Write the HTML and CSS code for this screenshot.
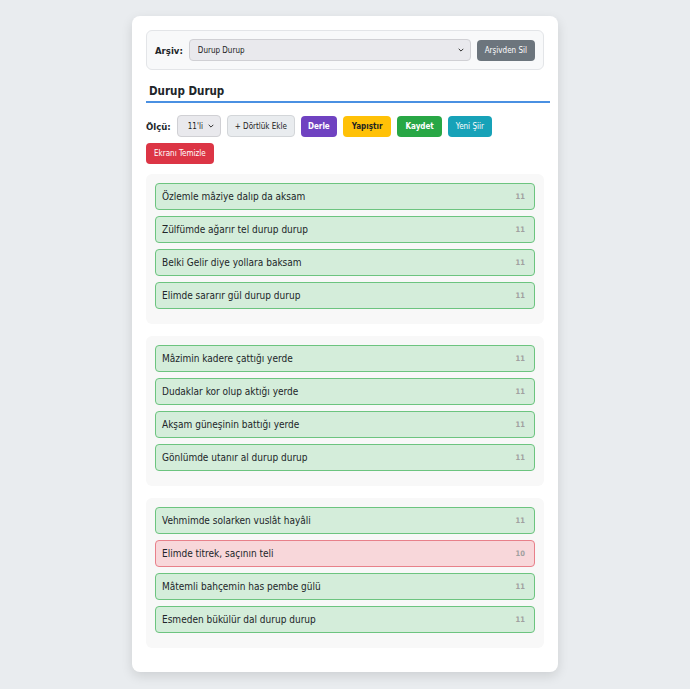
FILE: index.html
```html
<!DOCTYPE html>
<html lang="tr">
<head>
  <meta charset="UTF-8" />
  <meta name="viewport" content="width=device-width, initial-scale=1.0"/>
  <title>Şiir Defteri</title>
  <link rel="stylesheet" href="styles.css">
</head>
<body>
  <div class="card">
    <div class="archive-bar">
      <label for="archive">Arşiv:</label>
      <select id="archive">
        <option>Durup Durup</option>
      </select>
      <button class="btn btn-gray">Arşivden Sil</button>
    </div>

    <h2 class="poem-title">Durup Durup</h2>

    <div class="toolbar">
      <label for="meter">Ölçü:</label>
      <select id="meter">
        <option>11'li</option>
      </select>
      <button class="btn btn-light">+ Dörtlük Ekle</button>
      <button class="btn btn-purple">Derle</button>
      <button class="btn btn-yellow">Yapıştır</button>
      <button class="btn btn-green">Kaydet</button>
      <button class="btn btn-teal">Yeni Şiir</button>
      <button class="btn btn-red">Ekranı Temizle</button>
    </div>

    <div class="stanza">
      <div class="line ok"><span>Özlemle mâziye dalıp da aksam</span><b>11</b></div>
      <div class="line ok"><span>Zülfümde ağarır tel durup durup</span><b>11</b></div>
      <div class="line ok"><span>Belki Gelir diye yollara baksam</span><b>11</b></div>
      <div class="line ok"><span>Elimde sararır gül durup durup</span><b>11</b></div>
    </div>

    <div class="stanza">
      <div class="line ok"><span>Mâzimin kadere çattığı yerde</span><b>11</b></div>
      <div class="line ok"><span>Dudaklar kor olup aktığı yerde</span><b>11</b></div>
      <div class="line ok"><span>Akşam güneşinin battığı yerde</span><b>11</b></div>
      <div class="line ok"><span>Gönlümde utanır al durup durup</span><b>11</b></div>
    </div>

    <div class="stanza">
      <div class="line ok"><span>Vehmimde solarken vuslât hayâli</span><b>11</b></div>
      <div class="line bad"><span>Elimde titrek, saçının teli</span><b>10</b></div>
      <div class="line ok"><span>Mâtemli bahçemin has pembe gülü</span><b>11</b></div>
      <div class="line ok"><span>Esmeden bükülür dal durup durup</span><b>11</b></div>
    </div>
  </div>
</body>
</html>
```

FILE: styles.css
```css
body {
  margin: 0;
  background-color: #e9ecef;
  font-family: 'DejaVu Sans Condensed', 'DejaVu Sans', sans-serif;
  font-stretch: condensed;
  color: #212529;
  padding: 16px 0 17px;
}
.card {
  width: 398px;
  margin: 0 auto 0 132px;
  background: #fff;
  border-radius: 8px;
  padding: 14px 14px 12px;
  box-shadow: 0 4px 12px rgba(0,0,0,0.12);
}
.archive-bar {
  display: flex;
  align-items: center;
  gap: 6px;
  height: 38px;
  padding: 0 8px;
  background: #f8f9fa;
  border: 1px solid #e3e5e8;
  border-radius: 6px;
}
.archive-bar label,
.toolbar label {
  font-weight: bold;
  font-size: 9.5px;
}
select {
  appearance: none;
  -webkit-appearance: none;
  height: 22px;
  font-family: inherit;
  font-stretch: condensed;
  font-size: 8px;
  border: 1px solid #d0d0d4;
  border-radius: 4px;
  background: #e9e9ed url("data:image/svg+xml,%3Csvg xmlns='http://www.w3.org/2000/svg' width='6' height='4' viewBox='0 0 6 4'%3E%3Cpath d='M0.7 0.8 3 3.1 5.3 0.8' fill='none' stroke='%23333' stroke-width='1'/%3E%3C/svg%3E") no-repeat right 6px center;
  color: #222;
  padding: 0 14px 0 8px;
}
#archive {
  flex: 1;
}
#meter {
  width: 44px;
  padding-left: 10px;
}
.btn {
  height: 21px;
  padding: 0 8px;
  font-family: inherit;
  font-stretch: condensed;
  font-size: 8px;
  border: none;
  border-radius: 4px;
  color: #fff;
  cursor: pointer;
}
.btn-gray { background: #6c757d; }
.btn-light { background: #e9ecef; color: #222; border: 1px solid #d3d6d9; height: 22px; padding: 0 7px; }
.btn-purple { background: #6f42c1; font-weight: bold; padding: 0 7px; }
.btn-yellow { background: #ffc107; color: #222; font-weight: bold; padding: 0 9px; }
.btn-green { background: #28a745; font-weight: bold; }
.btn-teal { background: #17a2b8; }
.btn-red { background: #dc3545; }

.poem-title {
  font-size: 11.5px;
  margin: 14px -6px 0 0;
  padding: 0 3px 3px;
  border-bottom: 2px solid #4a90e2;
}
.toolbar {
  display: flex;
  flex-wrap: wrap;
  align-items: center;
  gap: 6px;
  margin: 12px 0 10px;
}
.stanza {
  background: #f8f8f8;
  border-radius: 6px;
  padding: 9px 9px 9px;
  margin-bottom: 12px;
}
.line {
  display: flex;
  justify-content: space-between;
  align-items: center;
  height: 25px;
  padding: 0 9px 0 6px;
  margin-bottom: 6px;
  border-radius: 4px;
  font-size: 10px;
}
.line b {
  font-size: 7.5px;
  color: #a0a0a0;
}
.ok {
  background: #d4edda;
  border: 1px solid #6cc47f;
}
.bad {
  background: #f8d7da;
  border: 1px solid #e8808a;
}
```
